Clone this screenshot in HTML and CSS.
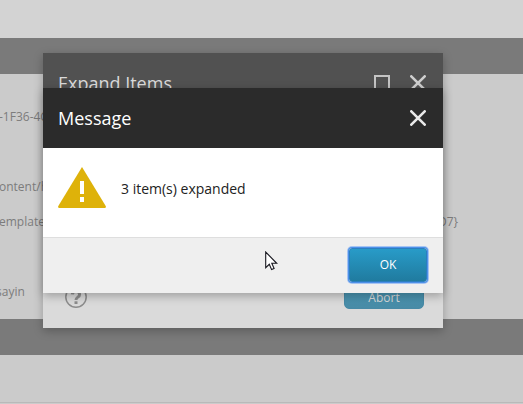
FILE: index.html
```html
<!DOCTYPE html>
<html lang="en">
<head>
<meta charset="utf-8">
<title>Expand Items</title>
<link rel="stylesheet" href="styles.css">
</head>
<body>
<div class="page">
  <div class="top"></div>
  <div class="band"></div>
  <div class="fields">
    <div class="row"><span class="id">-1F36-4C</span></div>
    <div class="row"></div>
    <div class="row"><span class="path">ontent/h</span></div>
    <div class="row template"><span>emplate</span><span class="tail">D7}</span></div>
    <div class="row"></div>
    <div class="row"><span class="user">sayin</span></div>
  </div>
  <div class="band"></div>
  <div class="bottom"></div>
</div>

<section class="dialog expand">
  <header class="title">
    <h2>Expand Items</h2>
    <svg class="max" width="16" height="16" viewBox="0 0 16 16"><rect x="1" y="1" width="14" height="14"/></svg>
    <svg class="close" width="16" height="16" viewBox="0 0 16 16"><path d="M1.3 1.3L14.7 14.7M14.7 1.3L1.3 14.7"/></svg>
  </header>
  <footer class="expand-footer">
    <svg class="help" width="22" height="22" viewBox="0 0 22 22"><circle cx="11" cy="11" r="10.2"/><path d="M7.3 8.4C7.5 4.6 14.6 4.6 14.6 8.5C14.6 11.3 11 11 11 14"/><rect x="9.5" y="15.3" width="3" height="2.7"/></svg>
    <button class="button abort">Abort</button>
  </footer>
</section>

<section class="dialog message">
  <header class="title">
    <h2>Message</h2>
    <svg class="close" width="16" height="16" viewBox="0 0 16 16"><path d="M1.3 1.3L14.7 14.7M14.7 1.3L1.3 14.7"/></svg>
  </header>
  <div class="content">
    <svg class="warning" width="48" height="41" viewBox="0 0 48 41"><path class="tri" d="M24 0L48 39.5Q48 41 46.5 41H1.5Q0 41 0 39.5Z"/><path class="mark" d="M22 14h4v13h-4zM22 30h4v5h-4z"/></svg>
    <p>3 item(s) expanded</p>
  </div>
  <footer class="message-footer"><button class="button ok">OK</button></footer>
</section>

<svg class="cursor" width="13" height="20" viewBox="0 0 13 20"><path d="M.7 1V16.7L4.3 13.3L6.6 18.6L9.1 17.5L6.8 12.3H11.7Z"/></svg>
</body>
</html>
```
FILE: styles.css
```css
* { box-sizing: border-box; }

body {
  margin: 0;
  width: 523px;
  height: 404px;
  position: relative;
  overflow: hidden;
  font: 12px/17px "Open Sans", sans-serif;
}

h2, p { margin: 0; font-weight: 400; }
svg { display: block; flex: none; }

.page { display: flex; flex-direction: column; height: 404px; background: #cbcbcb; }
.top { height: 38px; background: #d3d3d3; }
.band { height: 36px; background: #7a7a7a; }
.fields { height: 245px; padding-top: 25px; color: #7c7c7c; }
.row { display: flex; align-items: center; height: 35px; white-space: nowrap; }
.template { justify-content: space-between; padding-right: 65px; }
.row .id, .row .path, .template span:first-child { margin-left: -1px; }
.user { margin-left: -4px; }
.bottom { height: 48px; border-bottom: 1px solid #b9b9b9; }

.dialog { position: absolute; left: 43px; width: 400px; display: flex; flex-direction: column; }
.expand { top: 53px; height: 275px; background: #dadada; box-shadow: 0 3px 9px rgba(0, 0, 0, .25); }
.message { top: 88px; height: 205px; background: #fff; box-shadow: 0 3px 9px rgba(0, 0, 0, .28); }

.title { display: flex; align-items: center; height: 60px; padding: 0 17px 0 15px; background: #2b2b2b; color: #fff; }
.title h2 { flex: 1; font-size: 18px; line-height: 24px; }
.expand .title { background: #515151; color: #dadada; }
.close { fill: none; stroke: #eaeaea; stroke-width: 2.6; stroke-linecap: round; }
.expand .close { stroke: #cfcfcf; }
.max { margin-right: 20px; fill: none; stroke: #c4c4c4; stroke-width: 2; }

.content { display: flex; align-items: center; gap: 15px; height: 89px; padding: 0 15px 11px; color: #222; font-size: 14px; line-height: 20px; }
.content p { margin-top: 4px; }
.tri { fill: #deb20a; }
.mark { fill: #fff; }

.message-footer { display: flex; justify-content: flex-end; height: 56px; padding: 9px 16px; border-top: 1px solid #dedede; background: #efefef; }
.expand-footer { display: flex; align-items: flex-end; justify-content: space-between; margin-top: auto; padding: 0 19px 19px 22px; }
.help { margin-bottom: 1px; fill: none; stroke: #8c8c8c; stroke-width: 1.5; }
.help path { stroke-width: 3; }
.help rect { fill: #8c8c8c; stroke: none; }

.button { width: 80px; height: 35px; padding: 0; border: 1px solid #2079a0; border-radius: 5px; background: linear-gradient(#289bc8, #207b9f); color: #fff; font: 12px/17px "Open Sans", sans-serif; }
.abort { border-color: #478aa6; background: linear-gradient(#4ca2c2, #488ba6); color: #dadada; padding-top: 12px; }
.ok { width: 78px; height: 34px; margin: 0 1px 0 0; padding-bottom: 1px; border-color: #2b7fc0; border-radius: 3px; box-shadow: 0 0 0 1px #4d90e8, 0 0 0 2px #a5c4f2; }
.ok { margin: 1px 0 0; }

.cursor { position: absolute; left: 265px; top: 251px; fill: #fff; stroke: #17171f; stroke-width: 1.1; }
```
